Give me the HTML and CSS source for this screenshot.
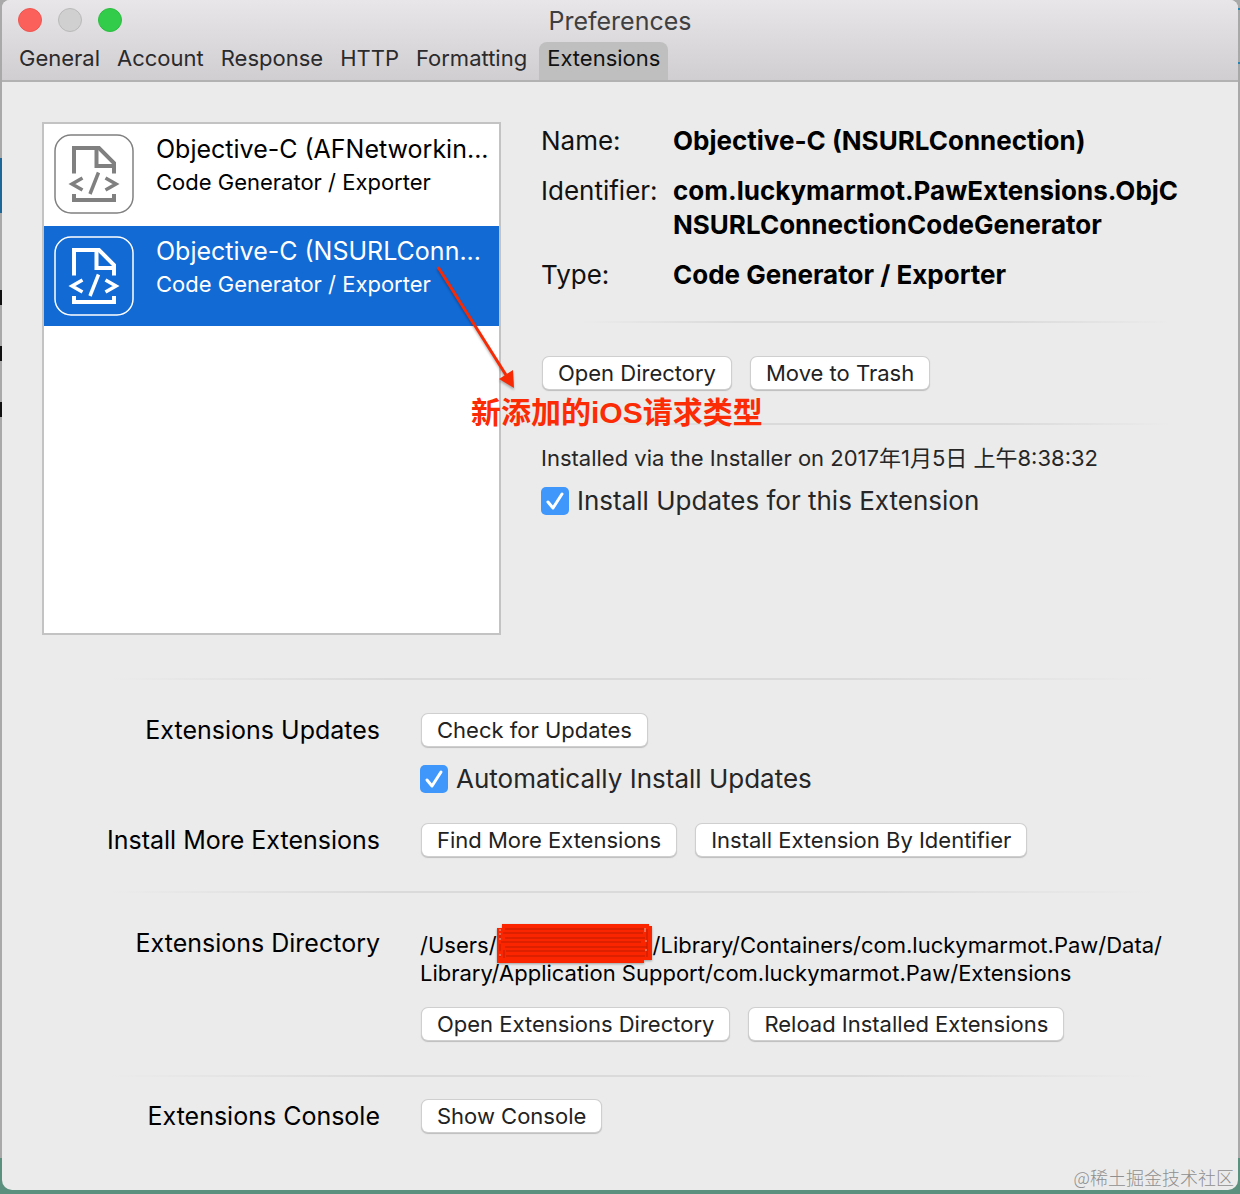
FILE: index.html
```html
<!DOCTYPE html>
<html lang="en">
<head>
<meta charset="utf-8">
<title>Preferences</title>
<link rel="stylesheet" href="styles.css">
</head>
<body>
<svg class="defs" aria-hidden="true">
  <symbol id="code-file" viewBox="0 0 80 80">
    <rect x="1" y="1" width="78" height="78" rx="16" fill="none" stroke="currentColor" stroke-width="1.500"/>
    <g fill="none" stroke="currentColor" stroke-width="4">
      <path d="M20 39.500V14H45L60 29V39.500"/>
      <path d="M42.500 14V32H60"/>
      <path d="M20 60V66H60V60"/>
      <path stroke-width="3.500" d="M28.500 44L18 50L28.500 56M51.500 44L62 50L51.500 56"/>
      <path stroke-width="3.500" d="M44.500 38.500L36 60"/>
    </g>
  </symbol>
</svg>
<main class="window">
  <header class="titlebar">
    <div class="title-row">
      <div class="lights">
        <button class="light close" aria-label="Close"></button>
        <button class="light minimize" aria-label="Minimize"></button>
        <button class="light zoom" aria-label="Zoom"></button>
      </div>
      <h1 class="title">Preferences</h1>
    </div>
    <nav class="tabs">
      <button class="tab">General</button>
      <button class="tab">Account</button>
      <button class="tab">Response</button>
      <button class="tab">HTTP</button>
      <button class="tab">Formatting</button>
      <button class="tab active">Extensions</button>
    </nav>
  </header>

  <div class="content">
    <section class="top">
      <ul class="list">
        <li class="item">
          <svg class="item-icon" aria-hidden="true"><use href="#code-file"/></svg>
          <div class="item-text">
            <div class="item-name">Objective-C (AFNetworkin...</div>
            <div class="item-kind">Code Generator / Exporter</div>
          </div>
        </li>
        <li class="item selected">
          <svg class="item-icon" aria-hidden="true"><use href="#code-file"/></svg>
          <div class="item-text">
            <div class="item-name">Objective-C (NSURLConn...</div>
            <div class="item-kind">Code Generator / Exporter</div>
          </div>
        </li>
      </ul>
      <div class="details">
        <dl class="facts">
          <dt>Name:</dt><dd>Objective-C (NSURLConnection)</dd>
          <dt>Identifier:</dt><dd>com.luckymarmot.PawExtensions.ObjC<wbr>NSURLConnectionCodeGenerator</dd>
          <dt>Type:</dt><dd>Code Generator / Exporter</dd>
        </dl>
        <hr class="rule">
        <div class="buttons">
          <button class="btn">Open Directory</button>
          <button class="btn">Move to Trash</button>
        </div>
        <hr class="rule">
        <p class="installed">Installed via the Installer on 2017年1月5日 上午8:38:32</p>
        <label class="check"><input type="checkbox" checked>Install Updates for this Extension</label>
      </div>
    </section>

    <hr class="rule">
    <section class="row">
      <h2 class="label">Extensions Updates</h2>
      <div class="field">
        <div class="buttons"><button class="btn">Check for Updates</button></div>
        <label class="check"><input type="checkbox" checked>Automatically Install Updates</label>
      </div>
    </section>
    <section class="row row-more">
      <h2 class="label">Install More Extensions</h2>
      <div class="buttons">
        <button class="btn">Find More Extensions</button>
        <button class="btn">Install Extension By Identifier</button>
      </div>
    </section>
    <hr class="rule">
    <section class="row row-directory">
      <h2 class="label">Extensions Directory</h2>
      <div class="field">
        <p class="path">/Users/<span class="redacted"><svg class="scribble" viewBox="0 0 155 40" aria-hidden="true">
          <path class="scribble-fill" d="M5 0H152V2H155V36H147V39H0V4H5Z"/>
          <path class="scribble-line" d="M8 5H148M6 9H146M8 14H148M4 18H144M8 23H150M9 27H148M9 32H148M3 9V16M3 20V27M3 30V33M7 26V34M150 5V33"/>
          <path class="scribble-gap" d="M2 6H4M2 10H4M2 15H4M2 31H4M148 4V8M148 17H150M148 26H150"/>
        </svg></span>/Library/Containers/com.luckymarmot.Paw/Data/<wbr>Library/Application Support/com.luckymarmot.Paw/Extensions</p>
        <div class="buttons">
          <button class="btn">Open Extensions Directory</button>
          <button class="btn">Reload Installed Extensions</button>
        </div>
      </div>
    </section>
    <hr class="rule">
    <section class="row row-console">
      <h2 class="label">Extensions Console</h2>
      <div class="buttons"><button class="btn">Show Console</button></div>
    </section>
  </div>

  <svg class="arrow" viewBox="0 0 84 128" aria-hidden="true">
    <path d="M4 3L72 111" fill="none" stroke="#f62b05" stroke-width="3"/>
    <path d="M80 124L65 115L79 106Z" fill="#f62b05"/>
  </svg>
  <p class="note">新添加的iOS请求类型</p>
  <p class="watermark">@稀土掘金技术社区</p>
</main>
</body>
</html>
```
FILE: styles.css
```css
* { box-sizing: border-box; }

body {
  margin: 0;
  min-height: 100vh;
  padding: 0 2px 4px;
  display: flex;
  font-family: Inter, "Noto Sans CJK SC", sans-serif;
  color: #111;
  background:
    linear-gradient(#111, #111) 0 290px / 2px 15px no-repeat,
    linear-gradient(#111, #111) 0 346px / 2px 15px no-repeat,
    linear-gradient(#111, #111) 0 402px / 2px 15px no-repeat,
    linear-gradient(#1d6798, #1d6798) 0 158px / 2px 55px no-repeat,
    linear-gradient(#2b84ad, #2b84ad) 100% 8px / 2px 2px no-repeat,
    linear-gradient(#2b84ad, #2b84ad) 100% 62px / 2px 2px no-repeat,
    linear-gradient(#5b8f7e, #5b8f7e) 0 100% / 100% 36px no-repeat,
    #a9a9a9;
}

button, input { font: inherit; color: inherit; margin: 0; }
h1, h2, p, ul, dl, dd { margin: 0; padding: 0; font-weight: 400; }
.defs { position: absolute; width: 0; height: 0; }

.window {
  position: relative;
  flex: 1;
  min-width: 0;
  background: #ebebeb;
  border-radius: 8px 8px 10px 10px;
  overflow: hidden;
}

.titlebar {
  background: linear-gradient(#e8e6e8, #d0ced0);
  border-bottom: 2px solid #b3b2b3;
}
.title-row {
  height: 42px;
  padding: 0 16px;
  display: grid;
  grid-template-columns: 1fr auto 1fr;
  align-items: center;
}
.lights { display: flex; gap: 16px; padding-bottom: 2px; }
.light {
  width: 24px;
  height: 24px;
  padding: 0;
  border: 1px solid;
  border-radius: 50%;
}
.close { background: #fc605b; border-color: #ee5550; }
.minimize { background: #d0d0d0; border-color: #b9b9b9; }
.zoom { background: #33cb4a; border-color: #2bbd41; }
.title { font-size: 25px; line-height: 30px; color: #3f3e40; }

.tabs { display: flex; gap: 1px; padding-left: 9px; }
.tab {
  height: 38px;
  padding: 0 8px 6px;
  border: 0;
  background: none;
  font-size: 22px;
  line-height: 32px;
  color: #2b2a2c;
}
.tab.active {
  margin-left: 3px;
  background: #c0bfc0;
  border-radius: 8px 8px 0 0;
  color: #111;
}

.content { padding: 40px 40px 56px; }
.top {
  display: grid;
  grid-template-columns: 459fr 657fr;
  gap: 40px;
  margin-bottom: 43px;
}
.list {
  height: 513px;
  list-style: none;
  background: #fff;
  border: 2px solid #c3c3c3;
  display: flex;
  flex-direction: column;
  gap: 2px;
}
.item {
  height: 100px;
  padding: 10px;
  display: flex;
  gap: 22px;
  color: #000;
}
.selected { background: #126ad4; color: #fff; }
.item-icon { width: 80px; height: 80px; flex: none; color: #808080; }
.selected .item-icon { color: #fff; }
.item-text { white-space: nowrap; }
.item-name { font-size: 25px; line-height: 30px; }
.item-kind { font-size: 22px; line-height: 36px; }

.facts {
  display: grid;
  grid-template-columns: 132px 1fr;
  row-gap: 16px;
  padding-top: 2px;
  font-size: 26px;
  line-height: 34px;
}
.facts dd { font-weight: 700; color: #000; }

.rule {
  height: 2px;
  margin: 0;
  border: 0;
  background: linear-gradient(90deg, transparent 6%, #dadada 30%, #dadada 70%, transparent 96%);
}
.details .rule { margin: 29px 0 33px; }
.details .buttons + .rule { margin: 33px 0 17px; }

.buttons { display: flex; gap: 20px; padding: 1px 2px; }
.btn {
  height: 32px;
  padding: 0 15px;
  border: 0;
  border-radius: 6px;
  background: #fff;
  box-shadow: 0 0 0 1px #cfcfcf, 0 1px 1px 1px #bdbdbd;
  font-size: 22px;
  line-height: 32px;
  white-space: nowrap;
  color: #222;
}

.installed { font-size: 22px; line-height: 32px; color: #262626; }
.check {
  display: flex;
  align-items: center;
  gap: 8px;
  font-size: 26px;
  line-height: 28px;
  color: #262626;
}
.details .check { margin-top: 13px; }
.check input {
  appearance: none;
  width: 28px;
  height: 28px;
  border-radius: 5px;
  background: #3f97fb url("data:image/svg+xml,%3Csvg xmlns='http://www.w3.org/2000/svg' viewBox='0 0 28 28'%3E%3Cpath d='M7 15L12 21L21 7' fill='none' stroke='white' stroke-width='3' stroke-linecap='round' stroke-linejoin='round'/%3E%3C/svg%3E");
}

.row {
  display: grid;
  grid-template-columns: 338px 1fr;
  gap: 40px;
  padding: 33px 0 30px;
}
.label { font-size: 25px; line-height: 34px; text-align: right; color: #000; }
.field .check { margin-top: 18px; }
.row-more { padding: 0 0 34px; }
.row-directory { padding: 33px 0 34px; }
.row-console { padding: 22px 0 0; }

.path { font-size: 22px; line-height: 28px; padding-top: 5px; color: #000; }
.path + .buttons { margin-top: 20px; }
.redacted { display: inline-block; position: relative; width: 156px; height: 20px; }
.scribble {
  position: absolute;
  left: 0;
  top: -9px;
  width: 155px;
  height: 40px;
  filter: drop-shadow(0 1px 1px #0005);
}
.scribble-fill { fill: #fb2500; }
.scribble-line { fill: none; stroke: #bf1d00; stroke-width: 1; }
.scribble-gap { fill: none; stroke: #e9b5ab; stroke-width: 1; }

.arrow {
  position: absolute;
  left: 432px;
  top: 264px;
  width: 84px;
  height: 128px;
  filter: drop-shadow(0 2px 1px #0004);
}
.note {
  position: absolute;
  left: 469px;
  top: 393px;
  font: 700 30px/40px "Liberation Sans", "Noto Sans CJK SC", sans-serif;
  color: #fb2b05;
}
.watermark {
  position: absolute;
  right: 4px;
  bottom: 0;
  font: 300 18px/26px "Noto Sans CJK SC", sans-serif;
  color: #8f8f8f;
}
```
